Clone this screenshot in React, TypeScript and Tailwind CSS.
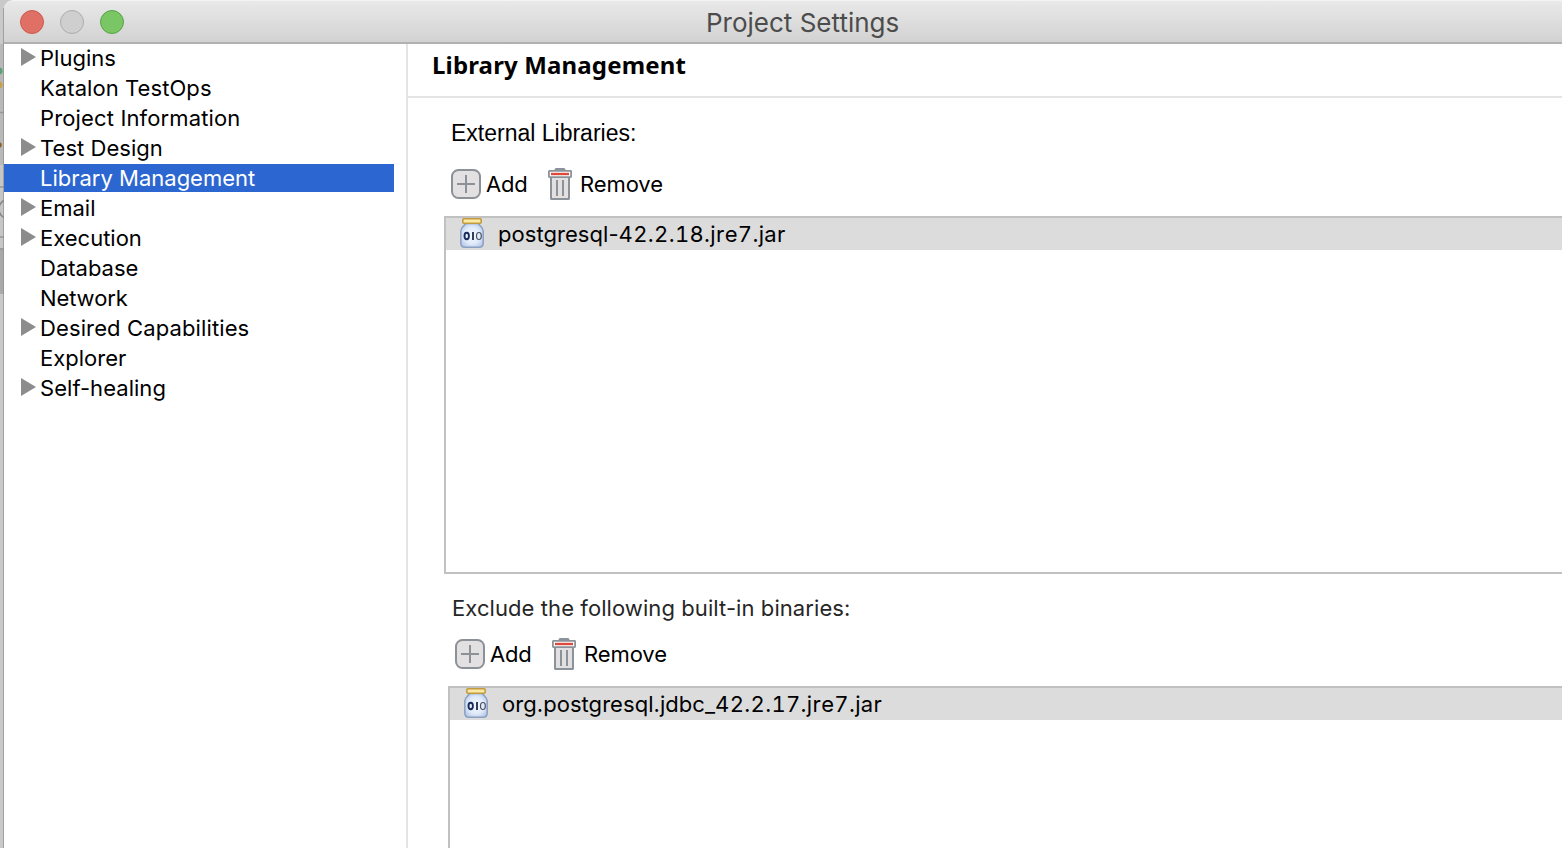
type TreeItem = { label: string; expandable?: boolean; selected?: boolean; tracking: string };

const items: TreeItem[] = [
  { label: "Plugins", expandable: true, tracking: "tracking-[0.02px]" },
  { label: "Katalon TestOps", tracking: "tracking-[0.07px]" },
  { label: "Project Information", tracking: "tracking-[0.14px]" },
  { label: "Test Design", expandable: true, tracking: "tracking-[0.04px]" },
  { label: "Library Management", selected: true, tracking: "tracking-[0px]" },
  { label: "Email", expandable: true, tracking: "tracking-[0px]" },
  { label: "Execution", expandable: true, tracking: "tracking-[0px]" },
  { label: "Database", tracking: "tracking-[0px]" },
  { label: "Network", tracking: "tracking-[-0.1px]" },
  { label: "Desired Capabilities", expandable: true, tracking: "tracking-[0.12px]" },
  { label: "Explorer", tracking: "tracking-[0px]" },
  { label: "Self-healing", expandable: true, tracking: "tracking-[0.04px]" },
];

function AddIcon() {
  return (
    <svg width="30" height="30" viewBox="0 0 30 30" className="shrink-0">
      <rect x="1" y="1" width="28" height="28" rx="6.5" fill="#e2e0e1" stroke="#8c9097" strokeWidth="2" />
      <path d="M15 6v18M6 15h18" stroke="#8c9097" strokeWidth="2" />
    </svg>
  );
}

function TrashIcon() {
  return (
    <svg width="24" height="32" viewBox="0 0 24 32" className="shrink-0">
      <path d="M6 2.500L7.500 0h9L18 2.500z" fill="#8c9299" />
      <rect x="3" y="9" width="18" height="22" rx="0.500" fill="#e2e0e1" stroke="#8c9299" strokeWidth="2" />
      <rect x="0.900" y="2.900" width="22.200" height="6.200" rx="0.500" fill="#fff" stroke="#8c9299" strokeWidth="1.800" />
      <rect x="3" y="4.800" width="18" height="2.400" fill="#dc4a3c" />
      <path d="M9 12v16M15 12v16" stroke="#8c9299" strokeWidth="2" />
    </svg>
  );
}

function JarIcon() {
  return (
    <svg width="24" height="30" viewBox="0 0 24 30" className="shrink-0">
      <defs>
        <radialGradient id="glass" cx="0.5" cy="0.5" r="0.6">
          <stop offset="0" stopColor="#f4f9ff" />
          <stop offset="0.6" stopColor="#dfeafa" />
          <stop offset="1" stopColor="#b4c8e4" />
        </radialGradient>
      </defs>
      <path
        d="M5.500 5.500h13c0.500 2 4.700 3.500 4.700 7.500v12c0 2.500-1.500 4.200-4 4.200H4.800c-2.500 0-4-1.700-4-4.200V13c0-4 4.200-5.500 4.700-7.500z"
        fill="url(#glass)"
        stroke="#8ba0c2"
        strokeWidth="1.500"
      />
      <rect x="2.800" y="0.800" width="18.400" height="4.400" rx="1.200" fill="#fbe9a6" stroke="#c39b3f" strokeWidth="1.600" />
      <ellipse cx="6.700" cy="18" rx="2.200" ry="3.200" fill="none" stroke="#182a5c" strokeWidth="1.900" />
      <path d="M13 14v8" stroke="#2b3550" strokeWidth="1.900" />
      <ellipse cx="18.900" cy="18" rx="2.400" ry="3.500" fill="none" stroke="#4b5060" strokeWidth="1.200" />
    </svg>
  );
}

function Toolbar() {
  return (
    <div className="flex h-8 items-center text-[22px] leading-8 text-black">
      <AddIcon />
      <span className="ml-[5px] w-[62px] whitespace-nowrap tracking-[-0.2px]">Add</span>
      <TrashIcon />
      <span className="ml-2 whitespace-nowrap tracking-[-0.1px]">Remove</span>
    </div>
  );
}

function JarRow({ name, version }: { name: string; version: string }) {
  return (
    <div className="flex h-8 items-center bg-[#dcdcdc] pl-3.5">
      <div className="flex h-8 w-[38px] shrink-0 items-start">
        <JarIcon />
      </div>
      <span className="whitespace-nowrap leading-8">
        <span className="tracking-[0.05px]">{name}</span>
        <span className="tracking-[0.34px] tabular-nums [font-kerning:none]">{version}</span>
      </span>
    </div>
  );
}

export default function App() {
  return (
    <div className="flex h-[848px] w-[1562px] overflow-hidden bg-white font-['Inter',sans-serif] text-[22px] text-black">
      <div className="h-full w-1 shrink-0 overflow-hidden">
        <svg width="4" height="848" viewBox="0 0 4 848">
          <rect width="4" height="848" fill="#c9c9c9" />
          <rect y="44" width="4" height="121" fill="#b9b9b9" />
          <rect y="165" width="4" height="83" fill="#c6c6c6" />
          <rect y="248" width="4" height="46" fill="#a9a9a9" />
          <path d="M0 112.500h4M0 187h4M0 237h4M0 249h4" stroke="#989898" strokeWidth="1.500" />
          <circle cx="-1" cy="71" r="3.500" fill="#5aa377" />
          <circle cx="-1" cy="85" r="3.500" fill="#c9a04d" />
          <circle cx="-1" cy="145" r="2.800" fill="#8b6026" />
          <circle cx="9" cy="209" r="10" fill="none" stroke="#80838a" strokeWidth="1.500" />
          <path d="M3.500 8v840" stroke="#8f8f8f" strokeOpacity="0.700" />
        </svg>
      </div>
      <div className="flex min-w-0 flex-1 flex-col">
        <div className="bg-[#c9c9c9]">
          <header className="flex h-11 items-center rounded-tl-[9px] border-t border-b-2 border-t-[#f4f4f4] border-b-[#b1b1b1] bg-linear-to-b from-[#e9e9e9] to-[#d2d2d2]">
            <div className="flex w-[120px] shrink-0 items-center gap-4 pl-4">
              <span className="size-6 shrink-0 rounded-full border border-[#cc5a50] bg-[#e07065]" />
              <span className="size-6 shrink-0 rounded-full border border-[#adadad] bg-[#cfcfcf]" />
              <span className="size-6 shrink-0 rounded-full border border-[#57a345] bg-[#7bc664]" />
            </div>
            <h1 className="ml-[582px] whitespace-nowrap pt-[2px] text-[26px] leading-8 text-[#4c4c4c]">Project Settings</h1>
          </header>
        </div>
        <div className="flex min-h-0 flex-1">
          <nav className="flex w-[404px] shrink-0 flex-col gap-0.5 border-r-2 border-[#e4e4e4]">
            {items.map((item) => (
              <div
                key={item.label}
                className={`flex h-7 w-[390px] items-center pl-[17px] ${item.selected ? "bg-[#2c66d1] text-white" : ""}`}
              >
                <span className="w-[19px] shrink-0">
                  {item.expandable && (
                    <svg width="15" height="18" viewBox="0 0 15 18" className="mb-0.5 block">
                      <path d="M0 0l15 9-15 9z" fill="#8c8c8c" />
                    </svg>
                  )}
                </span>
                <span className={`whitespace-nowrap leading-7 ${item.tracking}`}>{item.label}</span>
              </div>
            ))}
          </nav>
          <main className="flex min-w-0 flex-1 flex-col">
            <div className="h-[54px] shrink-0 border-b-2 border-[#e4e4e4] pl-6">
              <h2 className="whitespace-nowrap pt-[3px] font-['Noto_Sans',sans-serif] text-[24px] leading-9 font-bold tracking-[0.15px]">
                Library Management
              </h2>
            </div>
            <section className="flex flex-col pt-5 pl-9">
              <p className="pl-[7px] font-['Liberation_Sans',sans-serif] text-[23px] leading-[30px]">External Libraries:</p>
              <div className="mt-5 pl-[7px]">
                <Toolbar />
              </div>
              <div className="mt-4 h-[358px] border-y-2 border-l-2 border-[#c1c1c1]">
                <JarRow name="postgresql-" version="42.2.18.jre7.jar" />
              </div>
            </section>
            <section className="flex min-h-0 flex-1 flex-col pt-[18px] pl-10">
              <p className="shrink-0 pl-1 leading-8 tracking-[0.08px] text-[#262626]">Exclude the following built-in binaries:</p>
              <div className="mt-[14px] shrink-0 pl-[7px]">
                <Toolbar />
              </div>
              <div className="mt-4 min-h-0 flex-1 border-t-2 border-l-2 border-[#c1c1c1]">
                <JarRow name="org.postgresql.jdbc_" version="42.2.17.jre7.jar" />
              </div>
            </section>
          </main>
        </div>
      </div>
    </div>
  );
}
